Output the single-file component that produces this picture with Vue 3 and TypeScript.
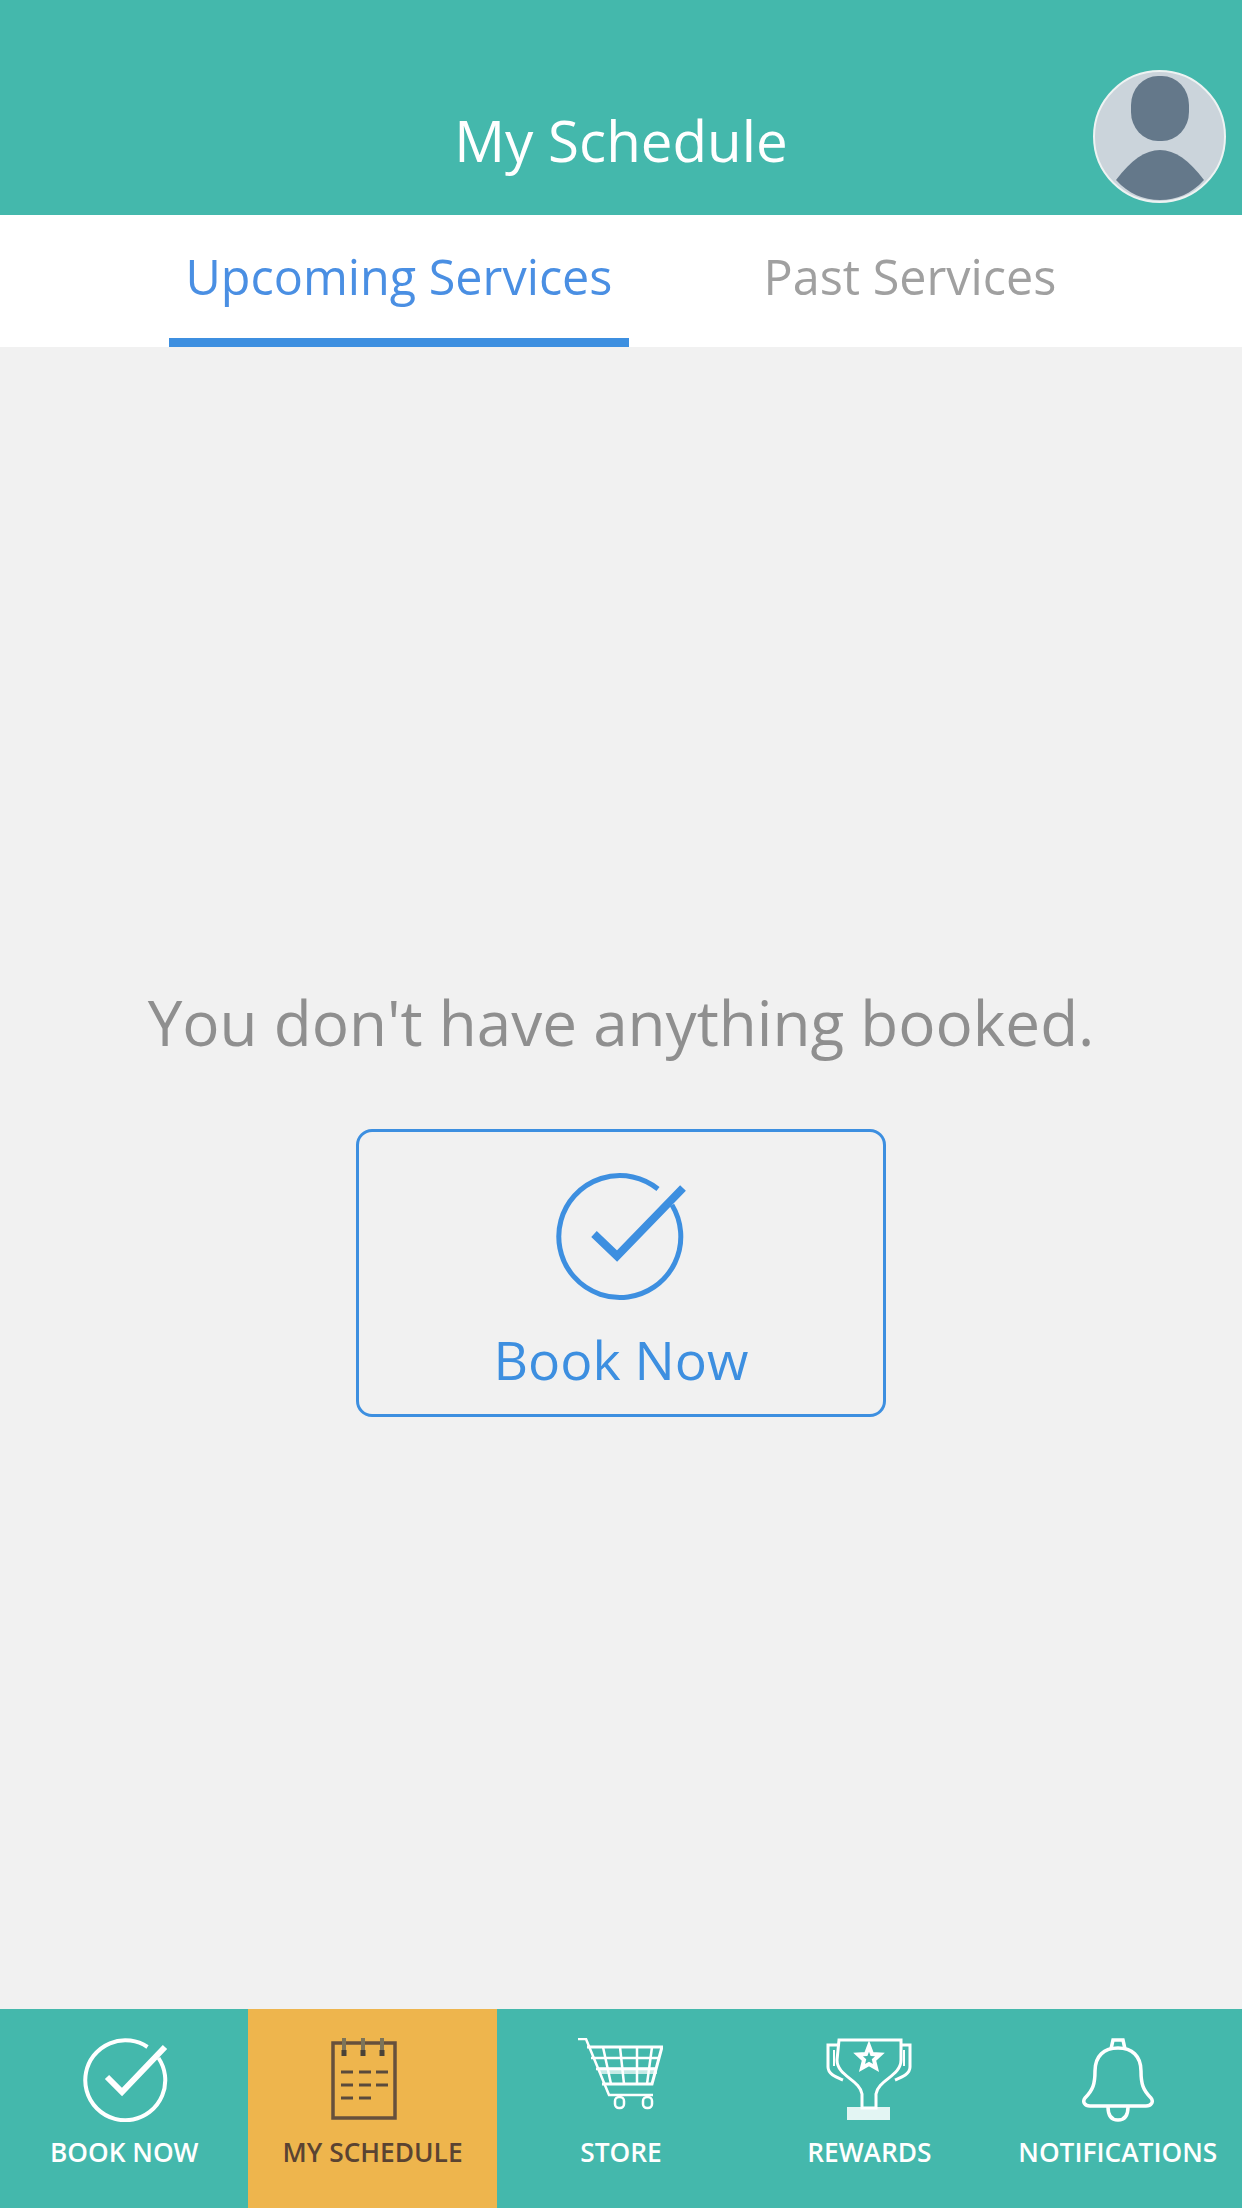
<script setup lang="ts">
const ringXs: number[] = [13, 32, 51]
const dashRows: { y: number; xs: number[] }[] = [
  { y: 34, xs: [10, 28, 45] },
  { y: 47, xs: [10, 28, 45] },
  { y: 60, xs: [10, 28] },
]
</script>

<template>
  <div class="page">
    <header class="header">
      <h1 class="title">My Schedule</h1>
      <div class="avatar">
        <svg viewBox="0 0 130 130" width="130" height="130">
          <rect x="36" y="4" width="58" height="65" rx="27" ry="29" fill="#64788a" />
          <path d="M21 108 C36 88 50 78 65 78 C80 78 94 88 109 108 C96 122 82 128 65 128 C48 128 34 122 21 108 Z" fill="#64788a" />
        </svg>
      </div>
    </header>

    <nav class="tabs">
      <div class="tab active">Upcoming Services</div>
      <div class="tab">Past Services</div>
    </nav>

    <main class="content">
      <p class="empty">You don't have anything booked.</p>
      <button class="book-btn">
        <svg class="book-icon" viewBox="0 0 132 128" width="132" height="128">
          <path d="M103 16 A61 61 0 1 0 117 32" fill="none" stroke="#3d8fe0" stroke-width="5" />
          <path d="M39 61 L62 83 L128 15" fill="none" stroke="#3d8fe0" stroke-width="8" />
        </svg>
        <span>Book Now</span>
      </button>
    </main>

    <footer class="bottom-nav">
      <div class="nav-item">
        <div class="nav-icon shift-right">
          <svg viewBox="0 0 88 84" width="88" height="84">
            <path d="M64.500 9 A40 40 0 1 0 75.500 20" fill="none" stroke="#fff" stroke-width="4" />
            <path d="M24 39 L39 54 L82 9" fill="none" stroke="#fff" stroke-width="6" />
          </svg>
        </div>
        <span class="nav-label">BOOK NOW</span>
      </div>

      <div class="nav-item current">
        <div class="nav-icon shift-left">
          <svg viewBox="0 0 66 82" width="66" height="82">
            <rect x="2" y="5" width="62" height="75" fill="none" stroke="#66503c" stroke-width="3.5" />
            <g v-for="x in ringXs" :key="x">
              <line :x1="x" y1="0" :x2="x" y2="12" stroke="#7d7458" stroke-width="4" />
              <line :x1="x" y1="12" :x2="x" y2="18" stroke="#4a4238" stroke-width="5" />
            </g>
            <g v-for="row in dashRows" :key="row.y">
              <line v-for="x in row.xs" :key="x" :x1="x" :y1="row.y" :x2="x + 12" :y2="row.y" stroke="#5a4a3c" stroke-width="3" />
            </g>
          </svg>
        </div>
        <span class="nav-label">MY SCHEDULE</span>
      </div>

      <div class="nav-item">
        <div class="nav-icon">
          <svg viewBox="0 0 85 72" width="85" height="72">
            <g fill="none" stroke="#fff" stroke-width="2.500">
              <path d="M0 1 L8 1 L31 57 L75 57" />
              <path d="M9 9 L84 9 L74 46 L24 46" stroke-width="3" />
              <path d="M13 20 L81 20 M18 31 L78 31" />
              <path d="M25 9 L33 46 M42 9 L46 46 M59 9 L59 46 M74 9 L69 46" />
              <rect x="37" y="59" width="9" height="11" rx="4" />
              <rect x="65" y="59" width="9" height="11" rx="4" />
            </g>
            <rect x="21" y="29" width="58" height="7" fill="#fff" opacity="0.7" />
          </svg>
        </div>
        <span class="nav-label">STORE</span>
      </div>

      <div class="nav-item">
        <div class="nav-icon">
          <svg viewBox="0 0 86 84" width="86" height="84">
            <g fill="none" stroke="#fff" stroke-width="3">
              <path d="M13 2 L75 2 L75 22 C75 38 52 42 50 56 L50 70 L36 70 L36 56 C34 42 11 38 11 22 Z" />
              <path d="M13 7 L2 7 L2 29 C2 36 10 39 17 42" />
              <path d="M75 7 L84 7 L84 29 C84 36 76 39 69 42" />
              <path d="M8 12 L8 28 M78 12 L78 28" stroke-width="2" />
            </g>
            <rect x="21" y="69" width="43" height="13" fill="#fff" opacity="0.85" />
            <path d="M43 8 L46 16 L54 16.500 L48 22 L50 30 L43 26 L36 30 L38 22 L32 16.500 L40 16 Z" fill="none" stroke="#fff" stroke-width="4" />
          </svg>
        </div>
        <span class="nav-label">REWARDS</span>
      </div>

      <div class="nav-item">
        <div class="nav-icon">
          <svg viewBox="0 0 72 84" width="72" height="84">
            <g fill="none" stroke="#fff" stroke-width="3.500">
              <path d="M29 11 L31 2 L41 2 L43 11" />
              <path d="M36 10 C22 10 13 18 13 33 C13 46 11 52 3 60 C0 64 3 68 8 68 L64 68 C69 68 72 64 69 60 C61 52 59 46 59 33 C59 18 50 10 36 10 Z" />
              <path d="M26 69 C26 78 30 82 36 82 C42 82 46 78 46 69" />
            </g>
          </svg>
        </div>
        <span class="nav-label">NOTIFICATIONS</span>
      </div>
    </footer>
  </div>
</template>

<style>
html,
body {
  margin: 0;
  padding: 0;
}
</style>

<style scoped>
* {
  box-sizing: border-box;
}

.page {
  display: flex;
  flex-direction: column;
  width: 1242px;
  height: 2208px;
  background: #f1f1f1;
  font-family: "Open Sans", sans-serif;
  overflow: hidden;
}

.header {
  position: relative;
  display: flex;
  flex: none;
  align-items: flex-end;
  justify-content: center;
  height: 215px;
  padding-bottom: 38px;
  background: #44b8ac;
}

.title {
  margin: 0;
  color: #fff;
  font-size: 56.500px;
  font-weight: 400;
  line-height: 72px;
}

.avatar {
  position: absolute;
  top: 70px;
  left: 1093px;
  width: 133px;
  height: 133px;
  border: 2px solid #eef3f3;
  border-radius: 50%;
  background: #cbd4db;
  overflow: hidden;
}

.tabs {
  display: flex;
  flex: none;
  gap: 51px;
  height: 132px;
  padding-left: 169px;
  background: #fff;
}

.tab {
  width: 460px;
  padding-top: 29px;
  color: #a0a0a0;
  font-size: 48.500px;
  line-height: 64px;
  text-align: center;
}

.tab.active {
  border-bottom: 9px solid #3d8fe0;
  color: #4a8fe3;
}

.content {
  display: flex;
  flex: 1;
  flex-direction: column;
  align-items: center;
  padding-top: 631px;
}

.empty {
  margin: 0 0 63px;
  color: #8f8f8f;
  font-size: 62px;
  line-height: 88px;
}

.book-btn {
  display: flex;
  flex: none;
  flex-direction: column;
  align-items: center;
  width: 530px;
  height: 288px;
  padding: 41px 0 0;
  border: 3px solid #3d8fe0;
  border-radius: 16px;
  background: transparent;
  color: #3d8fe0;
  font-family: inherit;
  font-size: 53.500px;
  line-height: 76px;
}

.book-icon {
  display: block;
  flex: none;
  margin-bottom: 21px;
}

.bottom-nav {
  display: grid;
  flex: none;
  grid-template-columns: repeat(5, minmax(0, 1fr));
  height: 199px;
  background: #44b8ac;
  color: #fff;
}

.nav-item {
  display: flex;
  flex-direction: column;
  align-items: center;
  padding-top: 29px;
}

.nav-item.current {
  background: #eeb54d;
  color: #5a4332;
}

.nav-icon {
  display: flex;
  justify-content: center;
  height: 84px;
}

.nav-icon.shift-right {
  padding-left: 6px;
}

.nav-icon.shift-left {
  padding-right: 17px;
}

.nav-icon svg {
  display: block;
  flex: none;
}

.nav-label {
  margin-top: 12px;
  font-size: 26.300px;
  font-weight: 600;
  line-height: 36px;
  white-space: nowrap;
}
</style>
